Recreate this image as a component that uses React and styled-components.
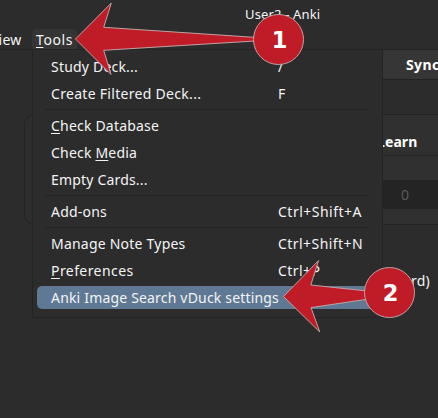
import React from 'react';
import styled, { createGlobalStyle } from 'styled-components';

const GlobalStyle = createGlobalStyle`
  body { margin: 0; background: #2c2c2c; overflow: hidden; }
  * { box-sizing: border-box; }
`;

const Window = styled.div`
  position: relative;
  display: flex;
  flex-direction: column;
  width: 438px;
  height: 418px;
  overflow: hidden;
  background: #2c2c2c;
  color: #f4f4f4;
  font: 14px/20px "Noto Sans", "Open Sans", sans-serif;
  white-space: nowrap;
`;

const TitleBar = styled.header`
  height: 29px;
  padding: 4px 0 0 245px;
  font-size: 13px;
  letter-spacing: 0.15px;
`;

const MenuBar = styled.nav`
  display: flex;
  height: 21px;
  border-bottom: 1px solid #242424;
`;

const MenuTitle = styled.span`
  flex: none;
  height: 20px;
  padding: 0 4px;
  border-radius: 5px 5px 0 0;
  line-height: 22px;
  letter-spacing: ${(p) => p.$tracking}px;
  background: ${(p) => (p.$open ? '#353535' : 'transparent')};
  width: ${(p) => p.$width}px;
  margin-left: ${(p) => p.$shift || 0}px;
`;

const Key = styled.span`
  text-decoration: underline;
  text-decoration-thickness: 1px;
  text-underline-offset: 2px;
  text-decoration-skip-ink: none;
`;

const Toolbar = styled.div`
  display: flex;
  justify-content: flex-end;
  height: 64px;
`;

const SyncButton = styled.div`
  width: 57px;
  height: 30px;
  padding-left: 25px;
  border-bottom: 1px solid #222;
  background: #363636;
  color: #fff;
  font-weight: 700;
  line-height: 30px;
  letter-spacing: 0.4px;
`;

const DeckPanel = styled.section`
  display: flex;
  flex-direction: column;
  height: 111px;
  margin-left: 24px;
  padding-left: 100px;
  border: 1px solid #232323;
  border-right: 0;
  border-radius: 10px 0 0 10px;
  background: linear-gradient(90deg, #2d2d2d 100px, #303030 100px);
`;

const DeckHeader = styled.div`
  height: 41px;
  padding: 17px 0 0 252px;
  border-bottom: 1px solid #232323;
  color: #fff;
  font-weight: 700;
  letter-spacing: 0.1px;
`;

const DeckRow = styled.div`
  height: 29px;
  margin-top: 24px;
  padding: 5px 0 0 276px;
  background: #242424;
  color: #5a5a5a;
`;

const StudiedText = styled.p`
  margin: 46px 8px 0 0;
  text-align: right;
  letter-spacing: 0.2px;
`;

const Menu = styled.div`
  position: absolute;
  left: 32px;
  top: 50px;
  width: 351px;
  height: 268px;
  padding: 3px 4px 6px;
  border: 1px solid #232323;
  border-top: 0;
  background: #2c2c2c;
`;

const MenuItem = styled.div`
  display: grid;
  grid-template-columns: 227px 1fr;
  align-items: center;
  height: 23px;
  margin: 2px 0;
  padding: 0 0 0 14px;
  border-radius: 5px;
  background: ${(p) => (p.$active ? '#5f7995' : 'transparent')};
`;

const Label = styled.span`
  letter-spacing: ${(p) => p.$tracking}px;
`;

const Separator = styled.div`
  height: 1px;
  margin: 2px 10px 2px 8px;
  background: #232323;
`;

const Group = styled.div`
  display: flow-root;
`;

const ItemSlot = styled.div`
  display: flow-root;
  height: 27px;
`;

const Annotation = styled.svg`
  position: absolute;
  inset: 0;
`;

const Badge = styled.div`
  position: absolute;
  left: ${(p) => p.$x}px;
  top: ${(p) => p.$y}px;
  display: flex;
  align-items: center;
  justify-content: center;
  width: 51px;
  height: 51px;
  padding: 1px 0 0 2px;
  border: 1px solid #c2a1a3;
  border-radius: 50%;
  background: #c01c28;
  color: #fff;
  font: 700 22.5px/26px "DejaVu Sans", sans-serif;
`;

const groups = [
  [
    { label: 'Study Deck...', tracking: 0.2, shortcut: '/' },
    { label: 'Create Filtered Deck...', tracking: 0.3, shortcut: 'F' },
  ],
  [
    { label: 'Check Database', tracking: 0.2, key: 0 },
    { label: 'Check Media', tracking: 0.2, key: 6 },
    { label: 'Empty Cards...', tracking: 0.18 },
  ],
  [{ label: 'Add-ons', tracking: 0.2, shortcut: 'Ctrl+Shift+A', spread: 0.49 }],
  [
    { label: 'Manage Note Types', tracking: 0.22, shortcut: 'Ctrl+Shift+N', spread: 0.44 },
    { label: 'Preferences', tracking: 0.42, key: 0, shortcut: 'Ctrl+P', spread: 0.42 },
    { label: 'Anki Image Search vDuck settings', tracking: 0.18, active: true },
  ],
];

function Mnemonic({ text, at }) {
  if (at === undefined) return text;
  return (
    <>
      {text.slice(0, at)}
      <Key>{text[at]}</Key>
      {text.slice(at + 1)}
    </>
  );
}

function ToolsMenu() {
  return (
    <Menu>
      {groups.map((items, i) => (
        <Group key={items[0].label}>
          {i > 0 && <Separator />}
          {items.map((item) => (
            <ItemSlot key={item.label}>
              <MenuItem $active={item.active}>
                <Label $tracking={item.tracking}>
                  <Mnemonic text={item.label} at={item.key} />
                </Label>
                <Label $tracking={item.spread || 0}>{item.shortcut}</Label>
              </MenuItem>
            </ItemSlot>
          ))}
        </Group>
      ))}
    </Menu>
  );
}

export default function App() {
  return (
    <>
      <GlobalStyle />
      <Window>
        <TitleBar>User2 - Anki</TitleBar>
        <MenuBar>
          <MenuTitle $tracking={0.2} $width={46} $shift={-14}>View</MenuTitle>
          <MenuTitle $open $tracking={0.6} $width={45}>
            <Mnemonic text="Tools" at={0} />
          </MenuTitle>
        </MenuBar>
        <Toolbar>
          <SyncButton>Sync</SyncButton>
        </Toolbar>
        <DeckPanel>
          <DeckHeader>Learn</DeckHeader>
          <DeckRow>0</DeckRow>
        </DeckPanel>
        <StudiedText>card)</StudiedText>
        <ToolsMenu />
        <Annotation width="438" height="418" fill="#c01c28" stroke="#c2a1a3">
          <path d="M75.5 39 L111.3 3 L103.7 27.3 L260 37.7 L260 40.7 L103.7 50.3 L111 74.5 Z" />
          <path d="M283.5 296.5 L318.6 260.5 L310.8 285 L372 291.5 L372 298.5 L311 307.6 L319.8 332 Z" />
        </Annotation>
        <Badge $x={253} $y={14}>1</Badge>
        <Badge $x={364} $y={267}>2</Badge>
      </Window>
    </>
  );
}
